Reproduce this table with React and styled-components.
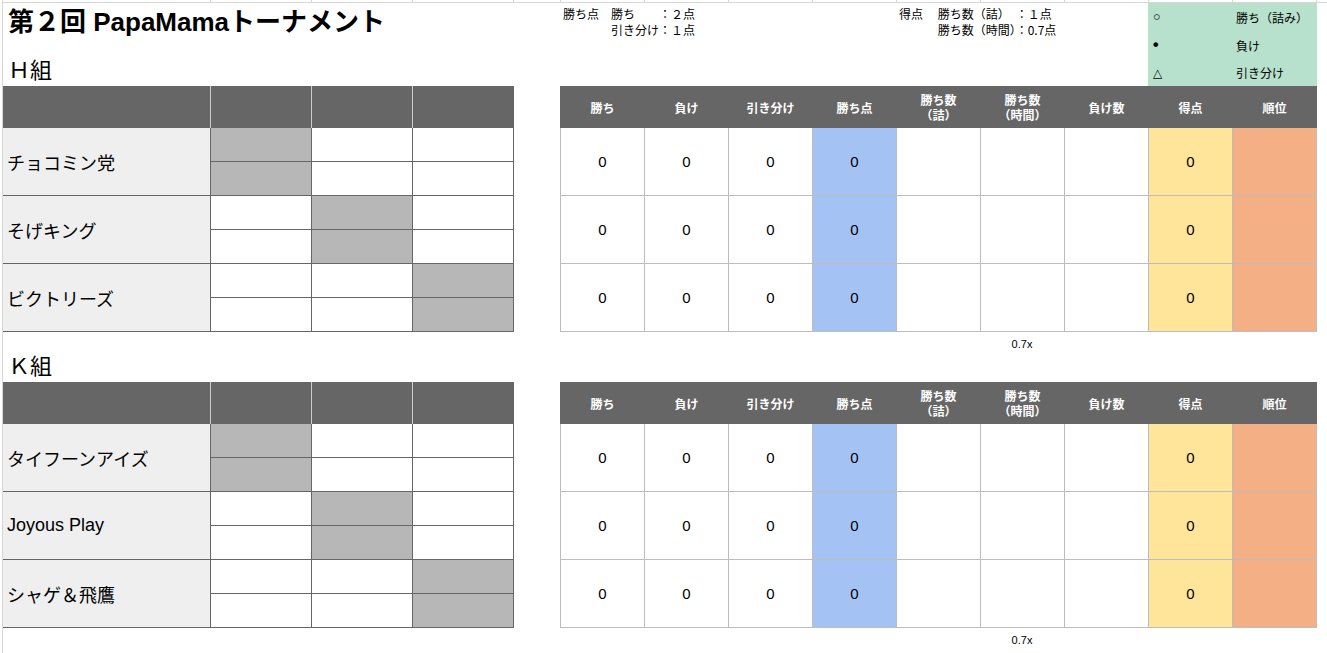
import React from 'react';
import styled, { createGlobalStyle } from 'styled-components';

const GlobalStyle = createGlobalStyle`
  body {
    margin: 0;
    background: #fff;
    color: #000;
    font-family: "Liberation Sans", "Noto Sans CJK JP", sans-serif;
  }
  * {
    box-sizing: border-box;
  }
`;

const Sheet = styled.div`
  margin-left: 2px;
  width: 1325px;
  min-height: 100vh;
  border-left: 1px solid #d6d6d6;
`;

const GridStrip = styled.div`
  display: flex;
  height: 3px;
  border-bottom: 1px solid #d6d6d6;
`;

const StripCell = styled.div`
  width: ${props => props.$w}px;
  height: 100%;
  border-right: 1px solid #d6d6d6;
`;

const Top = styled.div`
  display: flex;
  height: 83px;
`;

const TitleCol = styled.div`
  width: 557px;
  display: flex;
  flex-direction: column;
  justify-content: space-between;
`;

const Title = styled.h1`
  margin: 0;
  padding: 2px 0 0 5px;
  font-size: 26px;
  line-height: 34px;
  font-weight: 700;
  white-space: nowrap;
`;

const GroupLabel = styled.div`
  height: ${props => props.$h}px;
  display: flex;
  align-items: flex-end;
  padding: 0 0 2px 5px;
  font-size: 22px;
  line-height: 26px;
`;

const Note = styled.div`
  width: ${props => props.$w}px;
  padding: 3px 0 0 3px;
  font-family: "Noto Sans CJK JP", sans-serif;
  font-size: 12px;
  line-height: 16px;
  white-space: pre;
`;

const Legend = styled.div`
  width: 169px;
  background: #b7e1cd;
  display: grid;
  grid-template-columns: 84px 85px;
  grid-template-rows: 29px 27px 27px;
  font-family: "Noto Sans CJK JP", sans-serif;
  font-size: 12px;
`;

const LegendSym = styled.div`
  display: flex;
  align-items: center;
  padding-left: ${props => props.$pad || 5}px;
  font-family: "DejaVu Sans", "Noto Sans CJK JP", sans-serif;
  font-size: ${props => props.$size || 12}px;
  line-height: 1;
`;

const LegendText = styled.div`
  display: flex;
  align-items: center;
  padding-left: 4px;
`;

const Tables = styled.div`
  display: flex;
  gap: 46px;
  align-items: flex-start;
`;

const Matrix = styled.div`
  width: 511px;
`;

const MatrixHead = styled.div`
  display: grid;
  grid-template-columns: 207px 100px 100px 101px;
  column-gap: 1px;
  height: 42px;
  background: #cccccc;
`;

const HeadBlock = styled.div`
  background: #666666;
`;

const MatrixBody = styled.div`
  display: grid;
  grid-template-columns: 207px 100px 100px 100px;
  grid-auto-rows: 33px;
  gap: 1px;
  background: #666666;
  border-right: 1px solid #666666;
  border-bottom: 1px solid #666666;
`;

const NameCell = styled.div`
  grid-row: span 2;
  display: flex;
  align-items: center;
  padding-left: 4px;
  background: #efefef;
  font-size: 18px;
  white-space: nowrap;
`;

const MatchCell = styled.div`
  background: ${props => (props.$self ? '#b7b7b7' : '#ffffff')};
`;

const Stats = styled.div`
  width: 757px;
`;

const StatHead = styled.div`
  display: grid;
  grid-template-columns: repeat(9, 83px);
  column-gap: 1px;
  padding: 0 1px;
  height: 42px;
  background: #666666;
  color: #fff;
  font-family: "Noto Sans CJK JP", sans-serif;
  font-weight: 700;
  font-size: 12px;
`;

const StatHeadCell = styled.div`
  display: flex;
  flex-direction: column;
  align-items: center;
  justify-content: center;
  text-align: center;
`;

const HeadLine = styled.span`
  display: block;
  height: 15px;
  line-height: 15px;
`;

const StatBody = styled.div`
  display: grid;
  grid-template-columns: repeat(9, 83px);
  grid-auto-rows: 67px;
  gap: 1px;
  background: #bdbdbd;
  border: 1px solid #bdbdbd;
  border-top: none;
`;

const tones = {
  blue: '#a4c2f4',
  yellow: '#ffe599',
  orange: '#f4b084',
};

const StatCell = styled.div`
  display: flex;
  align-items: center;
  justify-content: center;
  background: ${props => tones[props.$tone] || '#ffffff'};
  font-size: 15px;
`;

const Foot = styled.div`
  height: 20px;
  margin-left: 977px;
  width: 84px;
  padding-top: 2px;
  text-align: center;
  font-size: 11px;
  line-height: 20px;
`;

const stripWidths = [208, 101, 101, 101, 47, 84, 84, 84, 84, 84, 84, 84, 84, 84];

const statCols = [
  { label: ['勝ち'], value: '0' },
  { label: ['負け'], value: '0' },
  { label: ['引き分け'], value: '0' },
  { label: ['勝ち点'], value: '0', tone: 'blue' },
  { label: ['勝ち数', '（詰）'] },
  { label: ['勝ち数', '（時間）'] },
  { label: ['負け数'] },
  { label: ['得点'], value: '0', tone: 'yellow' },
  { label: ['順位'], tone: 'orange' },
];

const groups = [
  { name: 'Ｈ組', teams: ['チョコミン党', 'そげキング', 'ビクトリーズ'] },
  { name: 'Ｋ組', teams: ['タイフーンアイズ', 'Joyous Play', 'シャゲ＆飛鷹'] },
];

function GroupTables({ teams }) {
  return (
    <Tables>
      <Matrix>
        <MatrixHead>
          <HeadBlock />
          <HeadBlock />
          <HeadBlock />
          <HeadBlock />
        </MatrixHead>
        <MatrixBody>
          {teams.map((team, t) => (
            <React.Fragment key={team}>
              <NameCell>{team}</NameCell>
              {[0, 1].map(sub =>
                teams.map((_, c) => <MatchCell key={`${sub}-${c}`} $self={c === t} />)
              )}
            </React.Fragment>
          ))}
        </MatrixBody>
      </Matrix>
      <Stats>
        <StatHead>
          {statCols.map((col, i) => (
            <StatHeadCell key={i}>
              {col.label.map(line => (
                <HeadLine key={line}>{line}</HeadLine>
              ))}
            </StatHeadCell>
          ))}
        </StatHead>
        <StatBody>
          {teams.map(team =>
            statCols.map((col, i) => (
              <StatCell key={`${team}-${i}`} $tone={col.tone}>
                {col.value}
              </StatCell>
            ))
          )}
        </StatBody>
      </Stats>
    </Tables>
  );
}

export default function App() {
  const [first, second] = groups;
  return (
    <>
      <GlobalStyle />
      <Sheet>
        <GridStrip>
          {stripWidths.map((w, i) => (
            <StripCell key={i} $w={w} />
          ))}
        </GridStrip>
        <Top>
          <TitleCol>
            <Title>第２回 PapaMamaトーナメント</Title>
            <GroupLabel $h={28}>{first.name}</GroupLabel>
          </TitleCol>
          <Note $w={336}>{'勝ち点　勝ち　　：２点\n　　　　引き分け：１点'}</Note>
          <Note $w={252}>{'得点　 勝ち数（詰）　：１点\n　　　 勝ち数（時間）：0.7点'}</Note>
          <Legend>
            <LegendSym $size={19} $pad={3}>◦</LegendSym>
            <LegendText>勝ち（詰み）</LegendText>
            <LegendSym $size={16} $pad={3}>•</LegendSym>
            <LegendText>負け</LegendText>
            <LegendSym>△</LegendSym>
            <LegendText>引き分け</LegendText>
          </Legend>
        </Top>
        <GroupTables teams={first.teams} />
        <Foot>0.7x</Foot>
        <GroupLabel $h={30}>{second.name}</GroupLabel>
        <GroupTables teams={second.teams} />
        <Foot>0.7x</Foot>
      </Sheet>
    </>
  );
}
